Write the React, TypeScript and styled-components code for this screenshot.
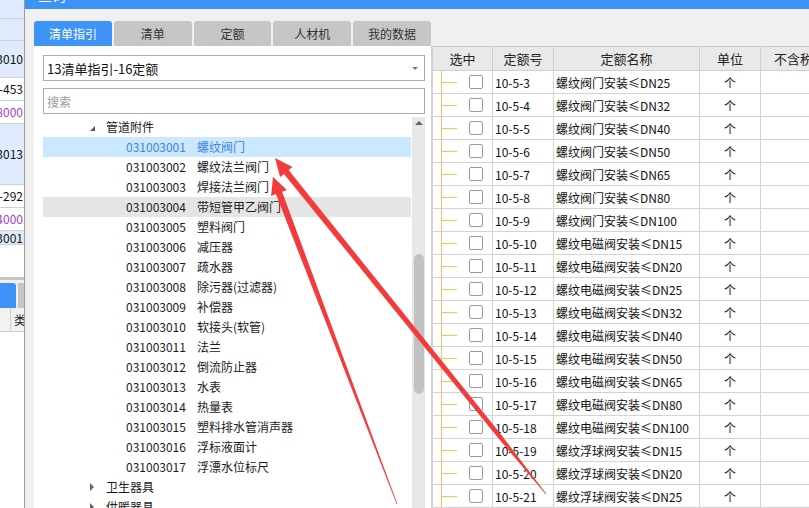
import React from 'react';
import styled, { createGlobalStyle } from 'styled-components';

const font = `"Noto Sans CJK SC", "Noto Sans", sans-serif`;

const GlobalStyle = createGlobalStyle`
  html, body { margin: 0; padding: 0; background: #fff; overflow: hidden; }
  body { font-family: ${font}; }
  * { box-sizing: border-box; }
`;

const Page = styled.div`
  position: relative;
  width: 809px;
  height: 508px;
  overflow: hidden;
  display: flex;
  font-family: ${font};
`;

/* ---------- background window strip on the left ---------- */
const Strip = styled.div`
  width: 25px;
  flex: none;
  border-right: 1px solid #9c9c9c;
  display: flex;
  flex-direction: column;
  background: #fff;
  overflow: hidden;
`;

const StripRow = styled.div<{ $h: number; $blue?: boolean; $purple?: boolean }>`
  height: ${p => p.$h}px;
  flex: none;
  display: flex;
  justify-content: flex-end;
  align-items: center;
  overflow: hidden;
  white-space: nowrap;
  background: ${p => (p.$blue ? '#dfeafc' : '#fff')};
  border-bottom: 1px solid #cbd2dc;
  font-size: 12px;
  line-height: 14px;
  color: ${p => (p.$purple ? '#a43fc6' : '#111')};
  padding-right: 1px;
`;

const StripBlank = styled.div`
  height: 35px;
  flex: none;
  background: #fff;
  border-bottom: 3px solid #c4c4c4;
`;

const StripTabs = styled.div`
  height: 28px;
  flex: none;
  display: flex;
  gap: 2px;
  padding-top: 3px;
  background: #f0f0f0;
`;

const StripTab = styled.div<{ $blue?: boolean }>`
  width: ${p => (p.$blue ? 16 : 8)}px;
  flex: none;
  border-radius: 0 3px 0 0;
  background: ${p => (p.$blue ? '#3d94f6' : '#c6c6c6')};
`;

const StripHead = styled.div`
  height: 24px;
  flex: none;
  display: flex;
  background: #f2f2f2;
  border-bottom: 1px solid #d0d0d0;
  font-size: 12px;
  color: #222;
`;

const StripHeadCell = styled.div<{ $w: number }>`
  width: ${p => p.$w}px;
  flex: none;
  border-right: 1px solid #d0d0d0;
  display: flex;
  align-items: center;
  padding-left: 3px;
  overflow: hidden;
  white-space: nowrap;
`;

/* ---------- dialog ---------- */
const Dialog = styled.div`
  flex: 1;
  min-width: 0;
  display: flex;
  flex-direction: column;
  background: #f0f0f0;
`;

const TitleBar = styled.div`
  height: 9px;
  flex: none;
  background: #3d93f5;
  overflow: hidden;
  padding-left: 13px;
  color: #fff;
  font-size: 14px;
  line-height: 14px;
`;

const TitleText = styled.div`
  margin-top: -12px;
`;

const Body = styled.div`
  flex: 1;
  min-height: 0;
  display: flex;
  padding: 12px 0 0 9px;
`;

const LeftCol = styled.div`
  width: 397px;
  flex: none;
  display: flex;
  flex-direction: column;
`;

const TabBar = styled.div`
  height: 25px;
  flex: none;
  display: flex;
  gap: 2px;
`;

const Tab = styled.div<{ $active?: boolean }>`
  flex: 0 1 78px;
  border-radius: 3px 3px 0 0;
  background: ${p => (p.$active ? '#3d94f6' : '#c6c6c6')};
  color: ${p => (p.$active ? '#fff' : '#333')};
  font-size: 12px;
  display: flex;
  align-items: center;
  justify-content: center;
`;

const Panel = styled.div`
  flex: 1;
  min-height: 0;
  background: #fff;
  padding: 9px 6px 0 9px;
  display: flex;
  flex-direction: column;
  overflow: hidden;
`;

const Select = styled.div`
  height: 26px;
  flex: none;
  border: 1px solid #ababab;
  display: flex;
  align-items: center;
  justify-content: space-between;
  padding: 0 6px 0 3px;
  font-size: 13px;
  color: #111;
`;

const Caret = styled.span`
  width: 0;
  height: 0;
  border-left: 3px solid transparent;
  border-right: 3px solid transparent;
  border-top: 3px solid #777;
`;

const Search = styled.div`
  height: 26px;
  flex: none;
  margin-top: 7px;
  border: 1px solid #ababab;
  display: flex;
  align-items: center;
  padding: 0 3px;
  font-size: 12px;
  color: #9a9a9a;
`;

const TreeArea = styled.div`
  flex: 1;
  min-height: 0;
  margin-top: 3px;
  display: flex;
  gap: 1px;
`;

const TreeList = styled.div`
  flex: 1;
  display: flex;
  flex-direction: column;
`;

const TreeRow = styled.div<{ $state?: 'selected' | 'hover'; $indent: number }>`
  height: 20px;
  flex: none;
  display: flex;
  align-items: center;
  padding-left: ${p => p.$indent}px;
  font-size: 12px;
  line-height: 20px;
  white-space: nowrap;
  background: ${p => (p.$state === 'selected' ? '#cce8ff' : p.$state === 'hover' ? '#e5e5e5' : 'transparent')};
  color: ${p => (p.$state === 'selected' ? '#3b86dc' : '#1a1a1a')};
`;

const Toggle = styled.span`
  width: 16px;
  flex: none;
  display: flex;
  align-items: center;
`;

const Expanded = styled.span`
  width: 0;
  height: 0;
  border-left: 5px solid transparent;
  border-bottom: 5px solid #595959;
  margin-top: 2px;
`;

const Collapsed = styled.span`
  width: 0;
  height: 0;
  border-top: 4px solid transparent;
  border-bottom: 4px solid transparent;
  border-left: 4px solid #666;
`;

const Code = styled.span`
  width: 71px;
  flex: none;
`;

const Scrollbar = styled.div`
  width: 13px;
  flex: none;
  background: #e8e8e8;
  display: flex;
  flex-direction: column;
  align-items: center;
`;

const ScrollUp = styled.span`
  margin-top: 4px;
  width: 0;
  height: 0;
  border-left: 4px solid transparent;
  border-right: 4px solid transparent;
  border-bottom: 4px solid #606060;
`;

const Thumb = styled.span`
  margin-top: 129px;
  width: 10px;
  height: 140px;
  border-radius: 5px;
  background: #c2c2c2;
`;

/* ---------- right table ---------- */
const RightCol = styled.div`
  flex: 1;
  min-width: 0;
  margin-top: 25px;
  border-left: 2px solid #d2d2d2;
  border-top: 1px solid #c8c8c8;
  background: #fff;
  overflow: hidden;
  display: flex;
  flex-direction: column;
`;

const cols = '60px 61px 146px 61px 92px';

const HeadRow = styled.div`
  display: grid;
  grid-template-columns: ${cols};
  height: 24px;
  flex: none;
`;

const HeadCell = styled.div`
  background: #e9e9e9;
  border-right: 1px solid #cfcfcf;
  border-bottom: 1px solid #cfcfcf;
  display: flex;
  align-items: center;
  justify-content: center;
  font-size: 13px;
  color: #222;
  white-space: nowrap;
`;

const DataRow = styled.div`
  display: grid;
  grid-template-columns: ${cols};
  height: 23px;
  flex: none;
`;

const Cell = styled.div<{ $center?: boolean }>`
  border-right: 1px solid #d3d3d3;
  border-bottom: 1px solid #d3d3d3;
  display: flex;
  align-items: center;
  justify-content: ${p => (p.$center ? 'center' : 'flex-start')};
  padding-left: ${p => (p.$center ? 0 : 2)}px;
  font-size: 12px;
  color: #111;
  white-space: nowrap;
  overflow: hidden;
`;

const GuideCell = styled.div`
  border-right: 1px solid #d3d3d3;
  border-bottom: 1px solid #d3d3d3;
  display: flex;
  align-items: stretch;
`;

const Guide = styled.div`
  margin-left: 8px;
  margin-bottom: -1px;
  width: 16px;
  flex: none;
  border-left: 1px solid #fdbf62;
  display: flex;
  align-items: center;
`;

const GuideStub = styled.div`
  flex: 1;
  height: 1px;
  background: #fdbf62;
`;

const Check = styled.span`
  align-self: center;
  margin-left: 12px;
  width: 14px;
  height: 14px;
  flex: none;
  border: 1px solid #9a9a9a;
  border-radius: 2px;
  background: #fff;
`;

/* ---------- annotation arrows ---------- */
const Overlay = styled.svg`
  position: absolute;
  left: 0;
  top: 0;
  pointer-events: none;
`;

const stripRows = [
  { h: 19, blue: true },
  { h: 22, blue: true },
  { h: 37, blue: true, text: '031003010' },
  { h: 23, text: '10-5-453' },
  { h: 23, text: '1.18000', purple: true },
  { h: 61, blue: true, text: '031003013' },
  { h: 23, text: '10-5-292' },
  { h: 23, text: '0.24000', purple: true },
  { h: 14, blue: true, text: '031003001' },
];

const leaves: [string, string][] = [
  ['031003001', '螺纹阀门'],
  ['031003002', '螺纹法兰阀门'],
  ['031003003', '焊接法兰阀门'],
  ['031003004', '带短管甲乙阀门'],
  ['031003005', '塑料阀门'],
  ['031003006', '减压器'],
  ['031003007', '疏水器'],
  ['031003008', '除污器(过滤器)'],
  ['031003009', '补偿器'],
  ['031003010', '软接头(软管)'],
  ['031003011', '法兰'],
  ['031003012', '倒流防止器'],
  ['031003013', '水表'],
  ['031003014', '热量表'],
  ['031003015', '塑料排水管消声器'],
  ['031003016', '浮标液面计'],
  ['031003017', '浮漂水位标尺'],
];

const quotas: [string, string][] = [
  ['10-5-3', '螺纹阀门安装≤DN25'],
  ['10-5-4', '螺纹阀门安装≤DN32'],
  ['10-5-5', '螺纹阀门安装≤DN40'],
  ['10-5-6', '螺纹阀门安装≤DN50'],
  ['10-5-7', '螺纹阀门安装≤DN65'],
  ['10-5-8', '螺纹阀门安装≤DN80'],
  ['10-5-9', '螺纹阀门安装≤DN100'],
  ['10-5-10', '螺纹电磁阀安装≤DN15'],
  ['10-5-11', '螺纹电磁阀安装≤DN20'],
  ['10-5-12', '螺纹电磁阀安装≤DN25'],
  ['10-5-13', '螺纹电磁阀安装≤DN32'],
  ['10-5-14', '螺纹电磁阀安装≤DN40'],
  ['10-5-15', '螺纹电磁阀安装≤DN50'],
  ['10-5-16', '螺纹电磁阀安装≤DN65'],
  ['10-5-17', '螺纹电磁阀安装≤DN80'],
  ['10-5-18', '螺纹电磁阀安装≤DN100'],
  ['10-5-19', '螺纹浮球阀安装≤DN15'],
  ['10-5-20', '螺纹浮球阀安装≤DN20'],
  ['10-5-21', '螺纹浮球阀安装≤DN25'],
  ['10-5-22', '螺纹浮球阀安装≤DN32'],
];

const tabs = ['清单指引', '清单', '定额', '人材机', '我的数据'];

export default function App() {
  return (
    <>
      <GlobalStyle />
      <Page>
        <Strip>
          {stripRows.map((r, i) => (
            <StripRow key={i} $h={r.h} $blue={r.blue} $purple={r.purple}>
              {r.text && <span>{r.text}</span>}
            </StripRow>
          ))}
          <StripBlank />
          <StripTabs>
            <StripTab $blue />
            <StripTab />
          </StripTabs>
          <StripHead>
            <StripHeadCell $w={11} />
            <StripHeadCell $w={14}>类</StripHeadCell>
          </StripHead>
        </Strip>

        <Dialog>
          <TitleBar>
            <TitleText>查询</TitleText>
          </TitleBar>
          <Body>
            <LeftCol>
              <TabBar>
                {tabs.map((t, i) => (
                  <Tab key={t} $active={i === 0}>{t}</Tab>
                ))}
              </TabBar>
              <Panel>
                <Select>
                  <span>13清单指引-16定额</span>
                  <Caret />
                </Select>
                <Search>搜索</Search>
                <TreeArea>
                  <TreeList>
                    <TreeRow $indent={47}>
                      <Toggle><Expanded /></Toggle>
                      管道附件
                    </TreeRow>
                    {leaves.map(([c, n], i) => (
                      <TreeRow key={c} $indent={83} $state={i === 0 ? 'selected' : i === 3 ? 'hover' : undefined}>
                        <Code>{c}</Code>
                        {n}
                      </TreeRow>
                    ))}
                    <TreeRow $indent={47}>
                      <Toggle><Collapsed /></Toggle>
                      卫生器具
                    </TreeRow>
                    <TreeRow $indent={47}>
                      <Toggle><Collapsed /></Toggle>
                      供暖器具
                    </TreeRow>
                  </TreeList>
                  <Scrollbar>
                    <ScrollUp />
                    <Thumb />
                  </Scrollbar>
                </TreeArea>
              </Panel>
            </LeftCol>

            <RightCol>
              <HeadRow>
                <HeadCell>选中</HeadCell>
                <HeadCell>定额号</HeadCell>
                <HeadCell>定额名称</HeadCell>
                <HeadCell>单位</HeadCell>
                <HeadCell>不含税单价</HeadCell>
              </HeadRow>
              {quotas.map(([c, n]) => (
                <DataRow key={c}>
                  <GuideCell>
                    <Guide>
                      <GuideStub />
                    </Guide>
                    <Check />
                  </GuideCell>
                  <Cell>{c}</Cell>
                  <Cell>{n}</Cell>
                  <Cell $center>个</Cell>
                  <Cell />
                </DataRow>
              ))}
            </RightCol>
          </Body>
        </Dialog>

        <Overlay width="809" height="508" viewBox="0 0 809 508">
          <polygon
            fill="#f43b3b"
            points="275,158 292.5,167 288.6,170.1 500.3,433.6 546.3,493.7 545.7,494.3 496.9,436.4 284,173.9 280.1,177"
          />
          <polygon
            fill="#f43b3b"
            points="273,177 286.9,189.9 282.1,191.7 397.4,503.9 396.6,504.1 275.9,194.1 271.1,195.9"
          />
        </Overlay>
      </Page>
    </>
  );
}
